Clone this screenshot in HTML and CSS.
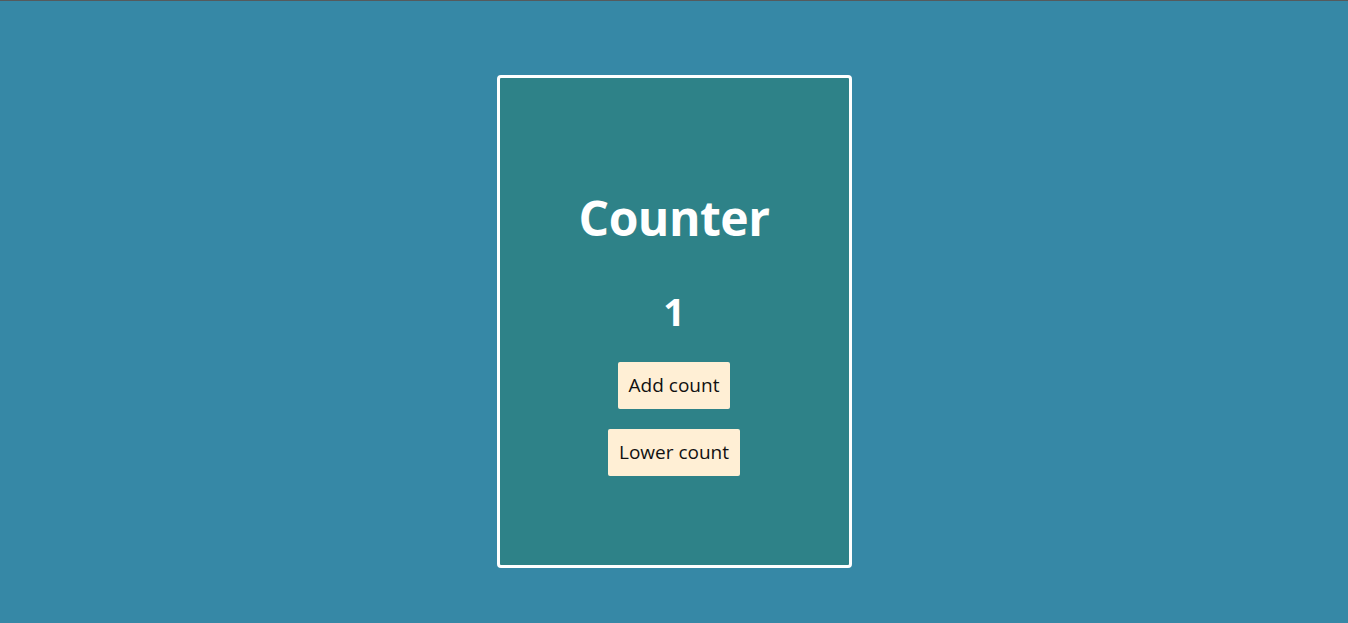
FILE: index.html
```html
<!DOCTYPE html>
<html>
<head>
<meta charset="utf-8">
<link rel="stylesheet" href="styles.css">
</head>
<body>
<div class="topline"></div>
<main class="page">
  <section class="card">
    <h1 class="title">Counter</h1>
    <h2 class="count">1</h2>
    <button class="btn">Add count</button>
    <button class="btn">Lower count</button>
  </section>
</main>
</body>
</html>
```
FILE: styles.css
```css
html, body {
  margin: 0;
  padding: 0;
}
body {
  background: #3688a6;
  font-family: "Open Sans", "Noto Sans", "Liberation Sans", sans-serif;
  height: 623px;
  overflow: hidden;
}
.topline {
  height: 1px;
  background: #555a5c;
}
.page {
  display: flex;
  justify-content: center;
  padding-top: 74px;
}
.card {
  box-sizing: border-box;
  width: 355px;
  height: 493px;
  padding-top: 26px;
  background: #2e8288;
  border: 3px solid #ffffff;
  border-radius: 4px;
  display: flex;
  flex-direction: column;
  align-items: center;
  justify-content: center;
}
.title {
  margin: 0;
  color: #ffffff;
  font-size: 48px;
  font-weight: 700;
  line-height: 1;
  letter-spacing: -0.5px;
}
.count {
  margin: 50px 0 32px;
  color: #ffffff;
  font-size: 38px;
  font-weight: 700;
  line-height: 1;
}
.btn {
  font-family: inherit;
  font-size: 19px;
  color: #111111;
  background: #ffefd5;
  border: none;
  border-radius: 2px;
  height: 47px;
  padding: 0 11px;
  cursor: pointer;
}
.btn + .btn {
  margin-top: 20px;
}
```
